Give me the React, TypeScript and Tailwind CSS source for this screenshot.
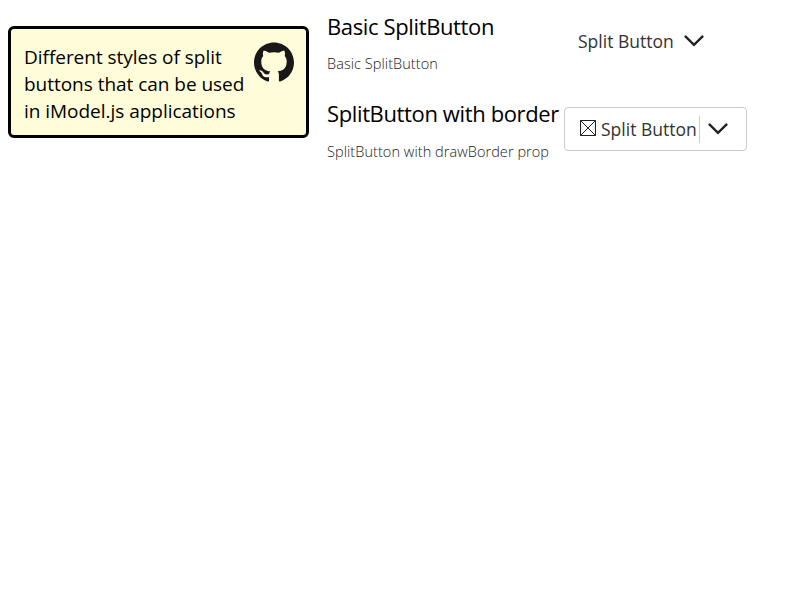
import React from "react";
import { SiGithub } from "react-icons/si";

function Chevron() {
  return (
    <svg width="20" height="13" viewBox="0 0 20 13" fill="none" stroke="#222" strokeWidth="2.4">
      <path d="M.9 .9 10 9.8 19.1 .9" />
    </svg>
  );
}

function Description({ title, text }: { title: string; text: string }) {
  return (
    <div className="w-[237px] whitespace-nowrap">
      <h2 className="h-8 text-[22px] leading-[30px] tracking-[-0.37px] text-black">{title}</h2>
      <p className="h-6 text-[14.5px] leading-6 font-light tracking-[0.06px] text-[#222]">{text}</p>
    </div>
  );
}

export default function App() {
  return (
    <div className="flex h-[602px] w-[803px] items-start overflow-hidden bg-white pl-2 font-['Open_Sans','Noto_Sans',sans-serif] text-[#222]">
      <aside className="mt-[26px] flex h-28 w-[301px] justify-between rounded-[6px] border-3 border-black bg-[#fffcd9] pt-[15px] pr-3 pl-[13px]">
        <p className="text-[19px] leading-[27px] tracking-[-0.03px] whitespace-nowrap text-black">
          Different styles of split
          <br />
          buttons that can be used
          <br />
          in iModel.js applications
        </p>
        <SiGithub className="-mt-[2px] size-10 text-[#191717]" />
      </aside>
      <main className="ml-[18px]">
        <section className="flex h-[87px] pt-[11px]">
          <div className="[&_p]:mt-[9px]">
            <Description title="Basic SplitButton" text="Basic SplitButton" />
          </div>
          <div className="ml-[14px] flex h-[60px] items-center gap-[9px]">
            <span className="w-[97px] text-[17.5px] whitespace-nowrap text-[#333]">Split Button</span>
            <Chevron />
          </div>
        </section>
        <section className="flex pt-[11px]">
          <div className="[&_p]:mt-[10px]">
            <Description title="SplitButton with border" text="SplitButton with drawBorder prop" />
          </div>
          <div className="mt-[9px] flex h-11 w-[183px] items-center rounded-[4px] border border-[#c7ccd1] pl-[15px]">
            <svg className="-mt-0.5" width="16" height="16" viewBox="0 0 16 16" fill="none" stroke="#222">
              <path d="M.5 .5h15v15H.5zM.5 .5l15 15M15.5 .5l-15 15" />
            </svg>
            <span className="ml-[5px] w-[98px] text-[17.5px] whitespace-nowrap text-[#333]">Split Button</span>
            <span className="mr-2 h-[27px] w-px bg-[#c7ccd1]" />
            <Chevron />
          </div>
        </section>
      </main>
    </div>
  );
}
